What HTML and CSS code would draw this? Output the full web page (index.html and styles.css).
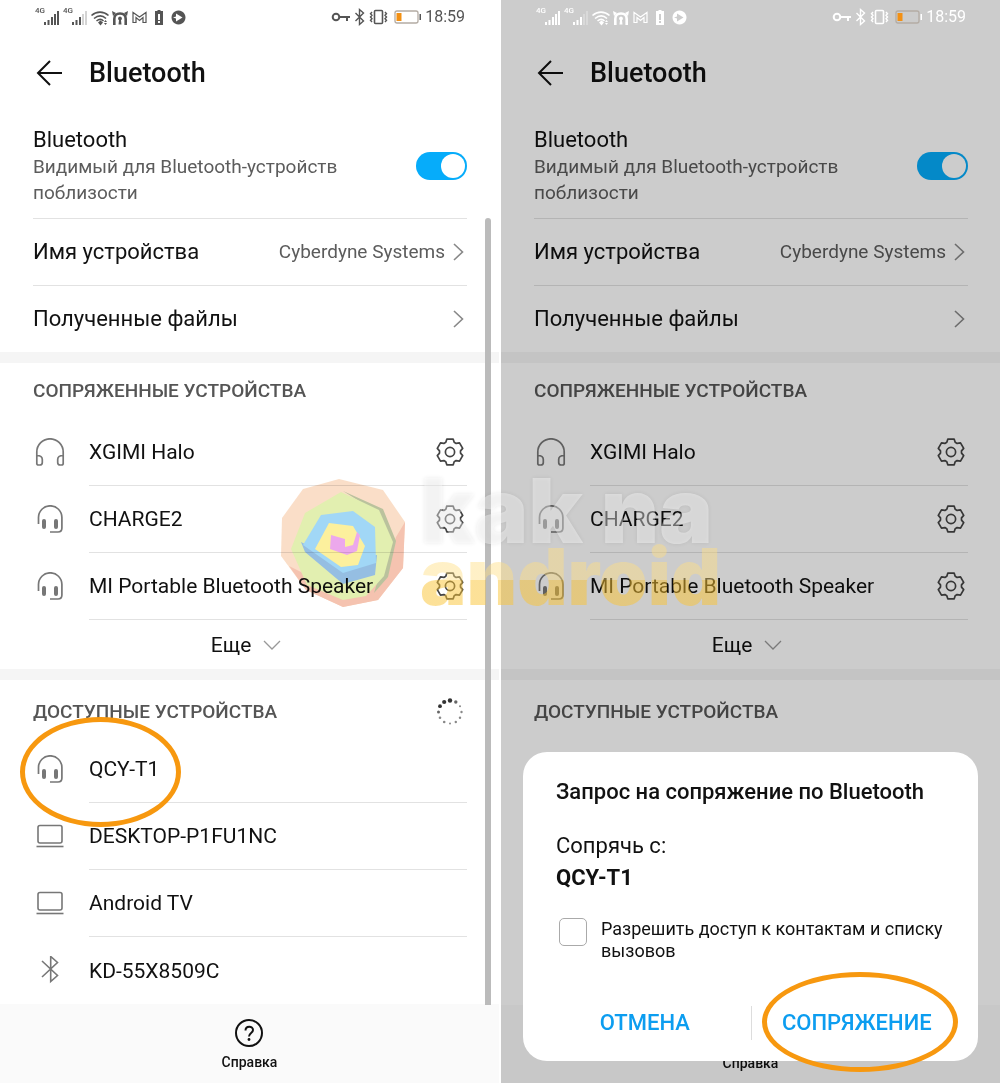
FILE: index.html
```html
<!DOCTYPE html>
<html lang="ru">
<head>
<meta charset="utf-8">
<meta name="viewport" content="width=device-width, initial-scale=1">
<title>Bluetooth</title>
<link rel="stylesheet" href="styles.css">
</head>
<body>
<svg class="sprite" aria-hidden="true">
  <symbol id="i-notify" viewBox="0 0 152 20">
    <g fill="currentColor">
      <path d="M9 15h2v3H9zM12.500 13h2v5h-2zM16 10h2v8h-2zM19 7h2v11h-2zM22 4h2v14h-2z"/>
      <path d="M37 15h2v3h-2zM40.500 13h2v5h-2zM44 10h2v8h-2z"/>
      <path opacity=".25" d="M47 7h2v11h-2zM50 4h2v14h-2z"/>
      <path d="M63 15.500l2.500-2 2.500 2-2.500 3zM69 15l1.500-2 1.500 2zM69 16h3l-1.500 2z"/>
      <path d="M77 4l4 2-3 3zM93 4l-4 2 3 3zM85 9.500a2 2 0 0 1 1 3.700l.5 4.300h-3l.5-4.300a2 2 0 0 1 1-3.700z"/>
      <path fill-rule="evenodd" d="M120 4h2.500V3h3v1h2.500v14h-8zM123 7v6h2V7zM123 14v2h2v-2z"/>
      <path fill-rule="evenodd" d="M143.500 3.500a7 7 0 1 0 .01 0zM141 6.500l6.500 4-6.500 4v-3l-3-1 3-1z"/>
    </g>
    <g fill="none" stroke="currentColor">
      <path stroke-width="1.600" d="M56.500 8.500c5-4.500 12-4.500 17 0M59 11.500c4-3.300 8.500-3.300 12 0M61.500 14c2.500-2 5-2 7 0"/>
      <path stroke-width="2.600" d="M79.300 18v-6c0-3.500 2-5.500 5.700-5.500s5.700 2 5.700 5.500v6"/>
      <path stroke-width="1.200" d="M98 15.500v-10l6.500 4.500 6.500-4.500v10h-3v-5l-3.500 3-3.500-3v5z"/>
    </g>
  </symbol>
  <symbol id="i-state" viewBox="0 0 92 20">
    <g fill="none" stroke="currentColor" stroke-width="1.600">
      <circle cx="7" cy="10" r="3.300" stroke-width="2"/>
      <path stroke-width="2" d="M10.500 10H21M18 10v4"/>
      <path stroke-width="1.400" d="M26.500 6l8 8-4 3.500v-15l4 3.500-8 8"/>
      <rect x="45.500" y="3.500" width="8" height="13" rx="1"/>
      <path stroke-width="1.400" d="M43 5l-1.500 1.700L43 8.300 41.500 10l1.500 1.700-1.500 1.600L43 15M56 5l1.500 1.700L56 8.300l1.500 1.700-1.500 1.700 1.500 1.600L56 15"/>
      <rect x="66" y="4" width="23" height="12" rx="2" stroke="#b4aca4" stroke-width="1.300"/>
    </g>
    <path fill="#f39013" d="M67.500 6h5v8h-5z"/>
    <path fill="currentColor" d="M90.500 7H92v6h-1.500z"/>
  </symbol>
  <symbol id="i-back" viewBox="0 0 26 26"><path fill="none" stroke="currentColor" stroke-width="2" d="M26 13H2M14 1L2 13l12 12"/></symbol>
  <symbol id="i-next" viewBox="0 0 12 20"><path fill="none" stroke="currentColor" stroke-width="1.600" d="M1 2l8.500 8L1 18"/></symbol>
  <symbol id="i-down" viewBox="0 0 18 10"><path fill="none" stroke="currentColor" stroke-width="1.300" d="M1 1l8 8 8-8"/></symbol>
  <symbol id="i-phones" viewBox="0 0 30 30">
    <path fill="none" stroke="currentColor" stroke-width="1.700" d="M1.800 26.500V14a13.200 13.200 0 0 1 26.400 0v12.500M1.800 17.500c4 0 5.500 1.500 5.500 4v3q0 2.500-2.500 2.500H3.500q-1.700 0-1.700-1.700M28.200 17.500c-4 0-5.500 1.500-5.500 4v3q0 2.500 2.500 2.500h1.300q1.700 0 1.700-1.700"/>
  </symbol>
  <symbol id="i-headset" viewBox="0 0 30 30">
    <path fill="none" stroke="currentColor" stroke-width="1.700" d="M3.500 19v-6.500a11.700 11.700 0 0 1 23.400 0V23q0 4-4 4H15"/>
    <rect fill="currentColor" x="7" y="14" width="4" height="10" rx="2"/><rect fill="currentColor" x="19" y="14" width="4" height="10" rx="2"/>
  </symbol>
  <symbol id="i-laptop" viewBox="0 0 30 30">
    <rect fill="none" stroke="currentColor" stroke-width="1.600" x="3" y="3.500" width="24" height="17.500" rx="2"/>
    <path stroke="currentColor" stroke-width="1.600" d="M1.500 24.500h27"/>
  </symbol>
  <symbol id="i-bt" viewBox="0 0 30 30"><path fill="none" stroke="currentColor" stroke-width="1.600" d="M7 5l15.500 14.500-6.800 6V.5l6.800 6L7 21"/></symbol>
  <symbol id="i-gear" viewBox="-14 -14 28 28">
    <g fill="none" stroke="currentColor" stroke-width="1.700" stroke-linejoin="round">
      <path d="M-3.200-12.800H3.200L4.200-9.700 6.100-8.600 9.500-9.200 12.700-3.600 10.500-1.100V1.100L12.700 3.600 9.500 9.200 6.100 8.600 4.200 9.700 3.200 12.800H-3.200L-4.200 9.700-6.100 8.600-9.500 9.200-12.700 3.600-10.500 1.100V-1.100L-12.700-3.600-9.500-9.200-6.100-8.600-4.200-9.700z"/>
      <circle r="4.600"/>
    </g>
  </symbol>
  <symbol id="i-spin" viewBox="-14 -14 28 28">
    <g fill="#333">
      <circle cy="-11.500" r="2.200"/><circle cx="-5.800" cy="-10" r="2.100"/><circle cx="-10" cy="-5.800" r="1.900"/>
      <g fill="#666"><circle cx="-11.500" r="1.500"/><circle cx="5.800" cy="-10" r="1.700"/></g>
      <g fill="#888"><circle cx="-10" cy="5.800" r="1.300"/><circle cx="-5.800" cy="10" r="1.300"/><circle cy="11.500" r="1"/><circle cx="5.800" cy="10" r="1.200"/><circle cx="10" cy="5.800" r="1.200"/><circle cx="11.500" r="1.200"/><circle cx="10" cy="-5.800" r="1"/></g>
    </g>
  </symbol>
  <symbol id="i-help" viewBox="0 0 28 28">
    <g fill="none" stroke="currentColor" stroke-width="2"><circle cx="14" cy="14" r="13"/><path d="M10.500 11.500c0-5 7.500-5 7.500-.5 0 3-4 3-4 6.500"/></g>
    <circle fill="currentColor" cx="14" cy="20.500" r="1.400"/>
  </symbol>
</svg>

<main class="screens">
  <section class="phone">
    <div class="status">
      <div class="signals"><svg class="notify"><use href="#i-notify"/></svg><small>4G</small><small>4G</small></div>
      <svg class="state"><use href="#i-state"/></svg>
      <time>18:59</time>
    </div>
    <header class="bar">
      <button class="icon-btn" aria-label="Назад"><svg class="back"><use href="#i-back"/></svg></button>
      <h1>Bluetooth</h1>
    </header>
    <div class="group settings">
      <label class="row visible">
        <span class="about"><span class="name">Bluetooth</span><span class="hint">Видимый для Bluetooth-устройств поблизости</span></span>
        <input class="toggle" type="checkbox" checked>
      </label>
      <a class="row" href="#"><span class="name">Имя устройства</span><span class="value">Cyberdyne Systems</span><svg class="next"><use href="#i-next"/></svg></a>
      <a class="row" href="#"><span class="name">Полученные файлы</span><svg class="next"><use href="#i-next"/></svg></a>
    </div>
    <div class="group">
      <h2>СОПРЯЖЕННЫЕ УСТРОЙСТВА</h2>
      <ul>
        <li class="device"><svg class="kind"><use href="#i-phones"/></svg><div class="row"><span class="name">XGIMI Halo</span><button class="icon-btn" aria-label="Настройки XGIMI Halo"><svg class="gear"><use href="#i-gear"/></svg></button></div></li>
        <li class="device"><svg class="kind"><use href="#i-headset"/></svg><div class="row"><span class="name">CHARGE2</span><button class="icon-btn" aria-label="Настройки CHARGE2"><svg class="gear"><use href="#i-gear"/></svg></button></div></li>
        <li class="device"><svg class="kind"><use href="#i-headset"/></svg><div class="row"><span class="name">MI Portable Bluetooth Speaker</span><button class="icon-btn" aria-label="Настройки MI Portable Bluetooth Speaker"><svg class="gear"><use href="#i-gear"/></svg></button></div></li>
      </ul>
      <button class="more">Еще <svg class="down"><use href="#i-down"/></svg></button>
    </div>
    <div class="group found">
      <h2>ДОСТУПНЫЕ УСТРОЙСТВА <svg class="gear"><use href="#i-spin"/></svg></h2>
      <ul>
        <li class="device"><svg class="kind"><use href="#i-headset"/></svg><div class="row"><span class="name">QCY-T1</span></div><span class="ring ring-device"></span></li>
        <li class="device"><svg class="kind"><use href="#i-laptop"/></svg><div class="row"><span class="name">DESKTOP-P1FU1NC</span></div></li>
        <li class="device"><svg class="kind"><use href="#i-laptop"/></svg><div class="row"><span class="name">Android TV</span></div></li>
        <li class="device"><svg class="kind"><use href="#i-bt"/></svg><div class="row"><span class="name">KD-55X8509C</span></div></li>
      </ul>
    </div>
    <footer class="foot"><button class="help"><svg class="gear"><use href="#i-help"/></svg>Справка</button></footer>
    <span class="scroll"></span>
  </section>

  <section class="phone dimmed">
    <div class="status">
      <div class="signals"><svg class="notify"><use href="#i-notify"/></svg><small>4G</small><small>4G</small></div>
      <svg class="state"><use href="#i-state"/></svg>
      <time>18:59</time>
    </div>
    <header class="bar">
      <button class="icon-btn" aria-label="Назад"><svg class="back"><use href="#i-back"/></svg></button>
      <h1>Bluetooth</h1>
    </header>
    <div class="group settings">
      <label class="row visible">
        <span class="about"><span class="name">Bluetooth</span><span class="hint">Видимый для Bluetooth-устройств поблизости</span></span>
        <input class="toggle" type="checkbox" checked>
      </label>
      <a class="row" href="#"><span class="name">Имя устройства</span><span class="value">Cyberdyne Systems</span><svg class="next"><use href="#i-next"/></svg></a>
      <a class="row" href="#"><span class="name">Полученные файлы</span><svg class="next"><use href="#i-next"/></svg></a>
    </div>
    <div class="group">
      <h2>СОПРЯЖЕННЫЕ УСТРОЙСТВА</h2>
      <ul>
        <li class="device"><svg class="kind"><use href="#i-phones"/></svg><div class="row"><span class="name">XGIMI Halo</span><button class="icon-btn" aria-label="Настройки XGIMI Halo"><svg class="gear"><use href="#i-gear"/></svg></button></div></li>
        <li class="device"><svg class="kind"><use href="#i-headset"/></svg><div class="row"><span class="name">CHARGE2</span><button class="icon-btn" aria-label="Настройки CHARGE2"><svg class="gear"><use href="#i-gear"/></svg></button></div></li>
        <li class="device"><svg class="kind"><use href="#i-headset"/></svg><div class="row"><span class="name">MI Portable Bluetooth Speaker</span><button class="icon-btn" aria-label="Настройки MI Portable Bluetooth Speaker"><svg class="gear"><use href="#i-gear"/></svg></button></div></li>
      </ul>
      <button class="more">Еще <svg class="down"><use href="#i-down"/></svg></button>
    </div>
    <div class="group found">
      <h2>ДОСТУПНЫЕ УСТРОЙСТВА</h2>
    </div>
    <footer class="foot"><button class="help"><svg class="gear"><use href="#i-help"/></svg>Справка</button></footer>
    <div class="shade">
      <form class="dialog" role="dialog" aria-labelledby="pair-title">
        <h3 id="pair-title">Запрос на сопряжение по Bluetooth</h3>
        <p>Сопрячь с:</p>
        <p><strong>QCY-T1</strong></p>
        <label class="allow"><input type="checkbox">Разрешить доступ к контактам и списку вызовов</label>
        <div class="actions">
          <button type="button">ОТМЕНА</button>
          <button type="button">СОПРЯЖЕНИЕ<span class="ring ring-pair"></span></button>
        </div>
      </form>
    </div>
  </section>

  <div class="mark gem-mark" aria-hidden="true">
    <svg class="gem" viewBox="0 0 130 130">
      <path fill="#f7c9a4" d="M60 1l44 11 22 32-2 46-25 32-35 7-37-17L2 78 3 40 24 11z"/>
      <path fill="#ee9b7c" d="M126 44l-2 46-25 32-35 7-37-17L10 88l50 25 45-20 12-34z"/>
      <path fill="#8d9a5c" d="M64 13l40 18 13 32-8 36-14 16 14-46-10-34z"/>
      <path fill="#cfe47c" d="M62 14l38 18 14 32-9 34-18 20-23 4-36-15-16-36 14-36z"/>
      <path fill="#4f93cf" d="M22 64l4 10 38 32 32-9 2-20-40 6z"/>
      <path fill="#63bdf0" d="M42 37l32-4 22 16 1 36-33 10-40-28z"/>
      <path fill="#fbe65c" d="M50 45l24 3 12 20-7 19-17 2-26-18z"/>
      <path fill="#e06fe0" d="M52 57l14 4v8l8-2 4-13 3 3-3 16-10 4-17-6z"/>
    </svg>
  </div>
  <div class="mark words" aria-hidden="true"><span class="white">kak na</span><span class="gold">android</span></div>
</main>
</body>
</html>
```
FILE: styles.css
```css
* { box-sizing: border-box; }

body {
  margin: 0;
  background: #fff;
  color: #111;
  font: 400 21px/28px Roboto, "Noto Sans", sans-serif;
}

h1, h2, h3, p, ul { margin: 0; padding: 0; font-weight: 400; }
ul { list-style: none; }
a { color: inherit; text-decoration: none; }
button { border: 0; padding: 0; background: none; color: inherit; font: inherit; }
svg { display: block; flex: none; }

.sprite { position: absolute; width: 0; height: 0; }

.screens {
  position: relative;
  display: grid;
  grid-template-columns: 1fr 1fr;
  gap: 2px;
  min-height: 100vh;
  overflow: hidden;
}

.phone { position: relative; display: flex; flex-direction: column; background: #fff; }

.status {
  display: flex;
  align-items: center;
  height: 34px;
  padding: 0 34px 0 35px;
  color: #555;
  font-size: 16px;
}
.signals { position: relative; margin-right: auto; }
.signals small { position: absolute; top: 0; left: 0; font-size: 8px; font-weight: 500; line-height: 8px; }
.signals small + small { left: 28px; }
.notify { width: 152px; height: 20px; }
.state { width: 92px; height: 20px; margin-right: 4px; }

.bar { display: flex; align-items: center; gap: 27px; height: 78px; padding: 0 36px; }
.bar h1 { font-size: 27px; font-weight: 500; line-height: 36px; }
.back { width: 26px; height: 26px; }

.group { padding: 0 32px 0 33px; }
.group + .group { border-top: 11px solid #f5f5f5; }

.row {
  display: flex;
  flex: 1;
  align-items: center;
  gap: 8px;
  min-height: 67px;
  border-bottom: 1px solid #e2e2e2;
}
.settings .row { font-size: 22px; }
.settings .row:last-child { min-height: 66px; border-bottom: 0; }
.found li:last-child .row { border-bottom: 0; }
.row.visible { min-height: 107px; padding-top: 1px; }
.name { margin-right: auto; }
.about { flex: 1; max-width: 330px; margin-right: auto; }
.about .name, .hint { display: block; }
.hint, .value { color: #5c5c5c; font-size: 19px; line-height: 26px; }
.next { width: 12px; height: 20px; color: #888; margin-right: 2px; }

.toggle {
  appearance: none;
  display: flex;
  justify-content: flex-end;
  width: 51px;
  height: 28px;
  margin: 0;
  padding: 2px;
  border-radius: 14px;
  background: #06acfa;
}
.toggle::before { content: ""; width: 24px; height: 24px; border-radius: 50%; background: #fff; }

h2 {
  display: flex;
  align-items: center;
  justify-content: space-between;
  height: 56px;
  color: #555;
  font-size: 19px;
  font-weight: 500;
}
.found h2 { padding: 8px 3px 0 0; }

.device { position: relative; display: flex; align-items: center; gap: 24px; }
.kind { width: 30px; height: 30px; margin-left: 2px; color: #777; }
.gear { width: 28px; height: 28px; }
.device .gear { margin-right: 3px; color: #444; }

.more { display: flex; align-items: center; justify-content: center; gap: 12px; width: 100%; height: 49px; padding-right: 8px; }
.down { width: 18px; height: 10px; color: #999; }

.foot { flex: 1 0 78px; background: #fafafa; font-size: 14px; font-weight: 500; line-height: 18px; }
.help { display: flex; flex-direction: column; align-items: center; gap: 6px; margin: 0 auto; padding-top: 15px; }

.scroll {
  position: absolute;
  top: 218px;
  right: 8px;
  bottom: 78px;
  width: 6px;
  border-radius: 3px 3px 0 0;
  background: #bbb;
}

.ring { position: absolute; border: 5px solid #f7980f; border-radius: 50%; pointer-events: none; }
.ring-device { top: -19px; left: -13px; width: 161px; height: 110px; }
.ring-pair { top: -34px; left: 10px; width: 196px; height: 100px; }

.dimmed .status { position: relative; z-index: 2; color: #fff; }
.dimmed .found { min-height: 336px; }

.shade {
  position: absolute;
  inset: 0;
  z-index: 1;
  display: flex;
  align-items: flex-end;
  padding: 22px;
  background: rgba(0, 0, 0, .2);
}
.dialog { flex: 1; padding: 24px 16px 21px; border-radius: 24px; background: #fff; }
.dialog h3 { margin-bottom: 22px; font-size: 22px; font-weight: 500; line-height: 32px; }
.dialog h3, .dialog p { padding: 0 17px; }
.dialog p { font-size: 22px; line-height: 32px; }
.dialog strong { font-weight: 700; }
.allow { display: flex; align-items: flex-start; gap: 14px; margin-top: 24px; padding: 0 16px 0 20px; font-size: 18px; line-height: 22px; }
.allow input { appearance: none; flex: none; width: 28px; height: 28px; margin: 0; border: 1px solid #aaa; border-radius: 5px; }
.actions { display: grid; grid-template-columns: 1fr 1fr; margin-top: 44px; }
.actions button { position: relative; height: 34px; color: #0c9df0; font-size: 22px; font-weight: 500; }
.actions button + button { border-left: 1px solid #ddd; }

.mark { position: absolute; top: 478px; left: 50%; z-index: 3; pointer-events: none; }
.gem-mark { margin-left: -221px; mix-blend-mode: multiply; }
.gem { width: 130px; height: 130px; opacity: .6; }
.words {
  display: flex;
  flex-direction: column;
  align-items: flex-start;
  margin-left: -80px;
  font: 900 78px/66px Inter, sans-serif;
  white-space: nowrap;
}
.white { color: rgba(255, 255, 255, .4); font-size: 90px; text-shadow: 0 0 4px rgba(0, 0, 0, .08); }
.gold { color: transparent; background: linear-gradient(rgba(255, 222, 130, .45) 55%, rgba(250, 195, 50, .5) 55%); background-clip: text; }
```
